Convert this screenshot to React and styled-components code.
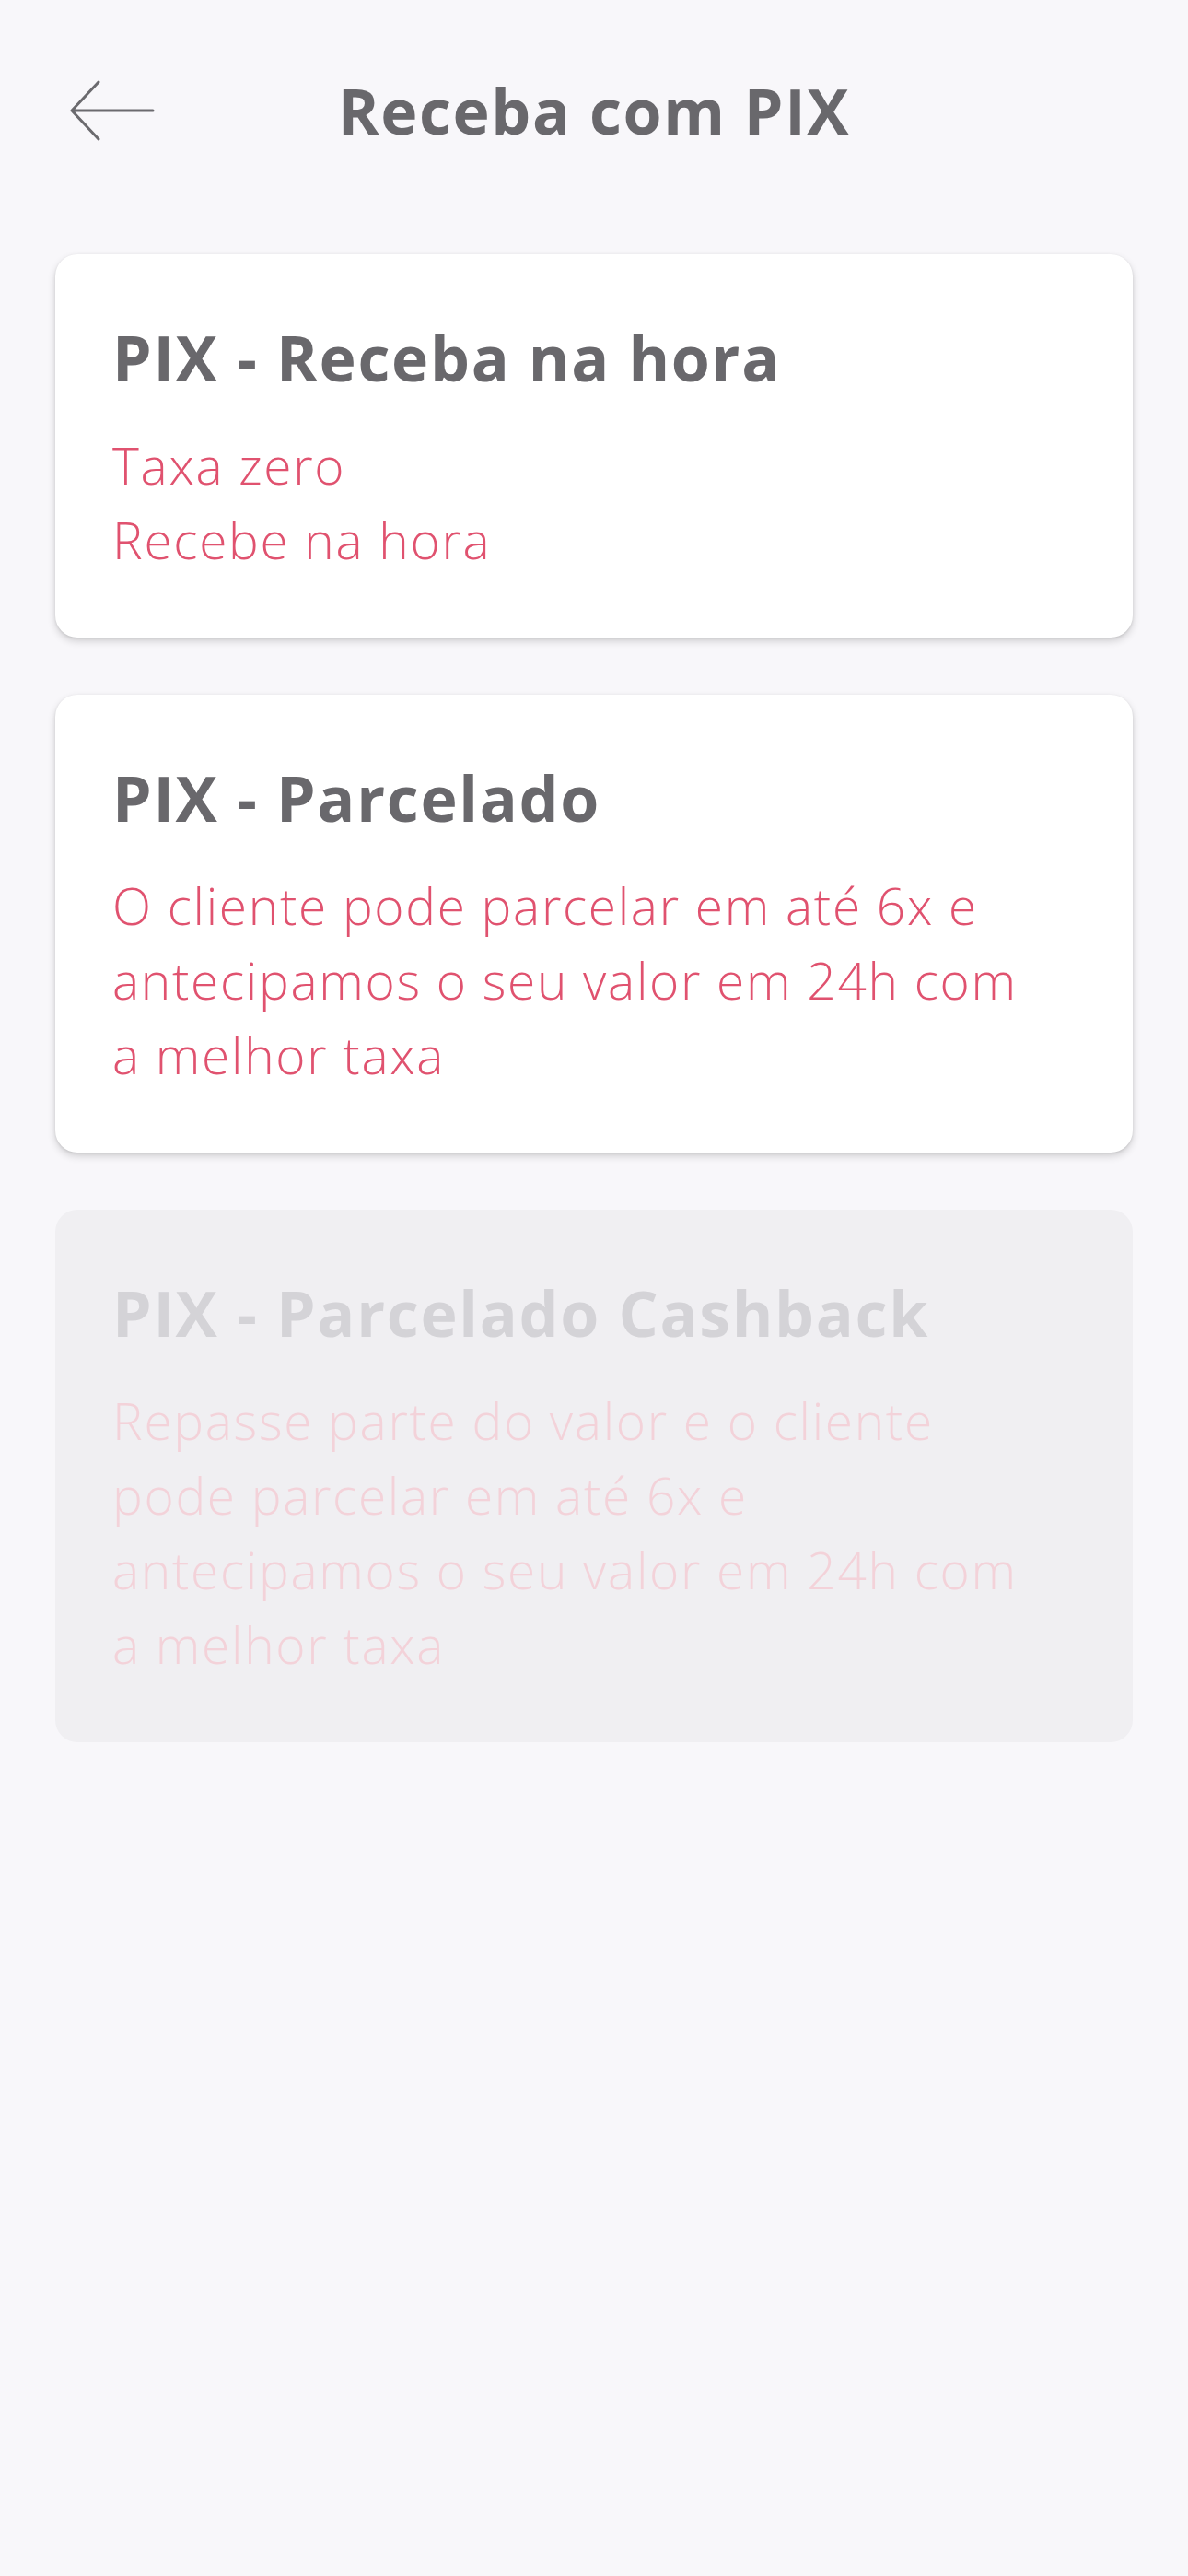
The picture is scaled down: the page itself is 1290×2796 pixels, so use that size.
import React from 'react';
import styled, { createGlobalStyle } from 'styled-components';

const GlobalStyle = createGlobalStyle`
  * { box-sizing: border-box; }
  html, body {
    margin: 0;
    padding: 0;
    background: #f8f7fa;
  }
  body {
    font-family: "Open Sans", "Noto Sans", sans-serif;
  }
`;

const Page = styled.div`
  min-height: 2796px;
  background: #f8f7fa;
  padding: 60px 60px 0;
`;

const Header = styled.header`
  display: grid;
  grid-template-columns: 1fr auto 1fr;
  align-items: center;
  height: 120px;
`;

const BackButton = styled.button`
  justify-self: start;
  display: flex;
  align-items: center;
  border: 0;
  background: none;
  padding: 0 0 0 16px;
  cursor: pointer;
  color: #6b6a6e;
`;

const Title = styled.h1`
  margin: 0;
  font-size: 68px;
  line-height: 68px;
  font-weight: 700;
  color: #69686c;
  letter-spacing: 1.6px;
`;

const List = styled.div`
  display: flex;
  flex-direction: column;
  gap: 62px;
  margin-top: 96px;
`;

const Card = styled.div`
  background: ${({ disabled }) => (disabled ? '#f0eff2' : '#ffffff')};
  border-radius: 24px;
  padding: 78px 62px 66px;
  box-shadow: ${({ disabled }) =>
    disabled ? 'none' : '0 4px 8px rgba(0, 0, 0, 0.16), 0 1px 3px rgba(0, 0, 0, 0.1)'};
  cursor: ${({ disabled }) => (disabled ? 'default' : 'pointer')};
`;

const CardTitle = styled.h2`
  margin: 0 0 42px;
  font-size: 68px;
  line-height: 68px;
  font-weight: 700;
  letter-spacing: 1.7px;
  color: ${({ disabled }) => (disabled ? '#d4d3d7' : '#69686c')};
`;

const CardText = styled.p`
  margin: 0;
  font-size: 55px;
  line-height: 81px;
  font-weight: 300;
  letter-spacing: 1.7px;
  color: ${({ disabled }) => (disabled ? '#f3d2d9' : '#e0526f')};
`;

const Line = styled.span`
  display: block;
  white-space: nowrap;
`;

const ArrowLeft = () => (
  <svg width="92" height="66" viewBox="0 0 92 66" fill="none">
    <path
      d="M2 33 H90 M31 2 L2 33 L31 64"
      stroke="currentColor"
      strokeWidth="3"
      strokeLinecap="round"
      strokeLinejoin="round"
    />
  </svg>
);

const options = [
  {
    title: 'PIX - Receba na hora',
    lines: ['Taxa zero', 'Recebe na hora'],
  },
  {
    title: 'PIX - Parcelado',
    lines: [
      'O cliente pode parcelar em até 6x e',
      'antecipamos o seu valor em 24h com',
      'a melhor taxa',
    ],
  },
  {
    title: 'PIX - Parcelado Cashback',
    lines: [
      'Repasse parte do valor e o cliente',
      'pode parcelar em até 6x e',
      'antecipamos o seu valor em 24h com',
      'a melhor taxa',
    ],
    disabled: true,
  },
];

export default function App() {
  return (
    <Page>
      <GlobalStyle />
      <Header>
        <BackButton aria-label="Voltar">
          <ArrowLeft />
        </BackButton>
        <Title>Receba com PIX</Title>
        <div />
      </Header>
      <List>
        {options.map((opt) => (
          <Card key={opt.title} disabled={opt.disabled}>
            <CardTitle disabled={opt.disabled}>{opt.title}</CardTitle>
            <CardText disabled={opt.disabled}>
              {opt.lines.map((l) => (
                <Line key={l}>{l}</Line>
              ))}
            </CardText>
          </Card>
        ))}
      </List>
    </Page>
  );
}
